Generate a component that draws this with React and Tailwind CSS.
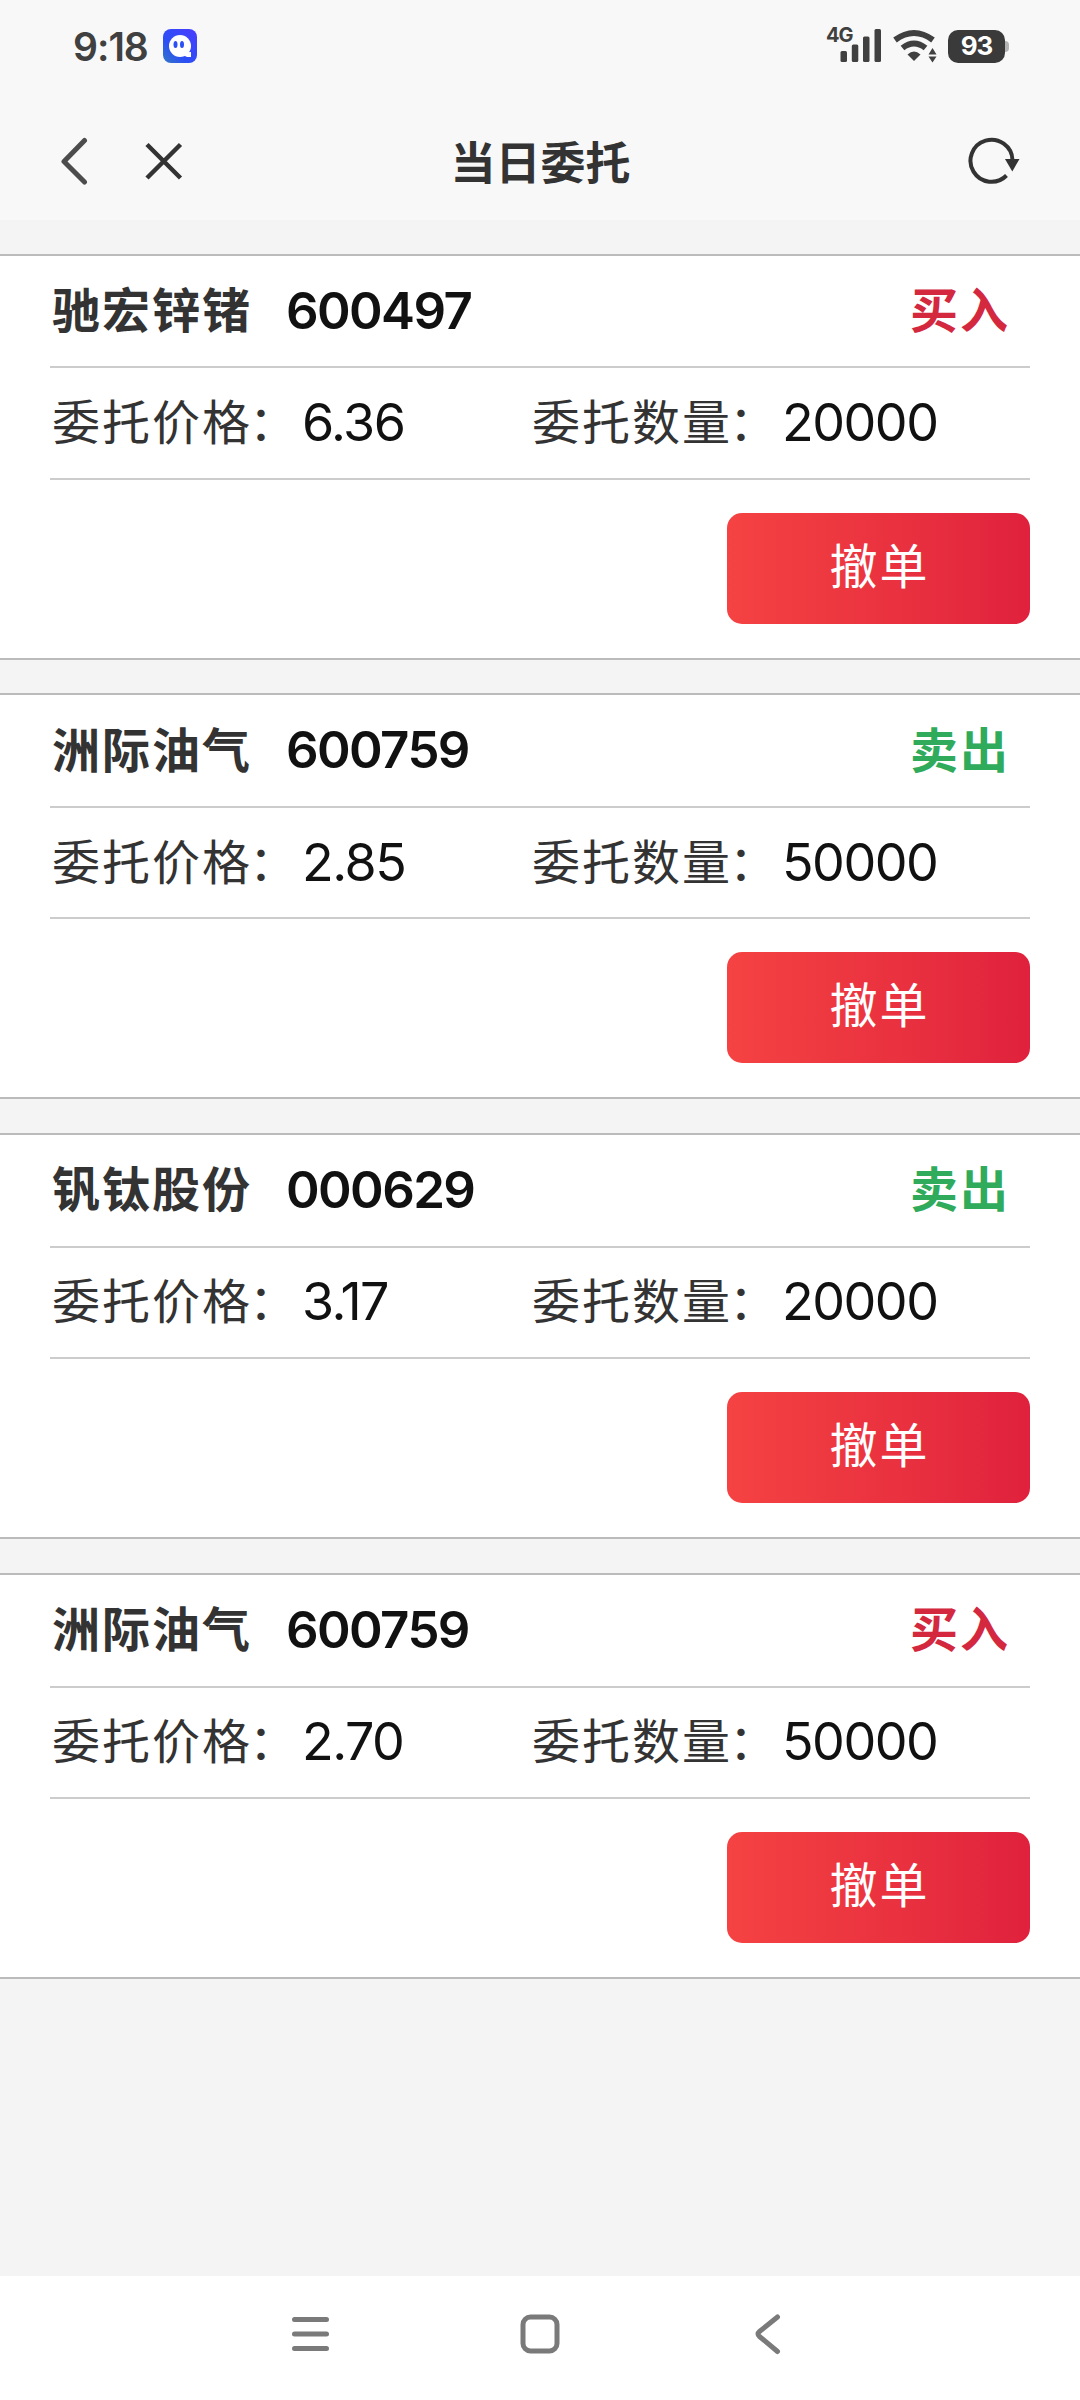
const orders = [
  { name: "驰宏锌锗", code: "600497", side: "buy", price: "6.36", amount: "20000" },
  { name: "洲际油气", code: "600759", side: "sell", price: "2.85", amount: "50000" },
  { name: "钒钛股份", code: "000629", side: "sell", price: "3.17", amount: "20000" },
  { name: "洲际油气", code: "600759", side: "buy", price: "2.70", amount: "50000" },
]

export default function App() {
  return (
    <div className="w-[1080px] h-[2400px] flex flex-col bg-[#f4f4f4] font-['Inter','Noto_Sans_CJK_SC',sans-serif] text-[#333333] overflow-hidden">
      <div className="h-[220px] shrink-0 bg-[#f8f8f8]">
        <StatusBar />
        <Header />
      </div>
      <div className="flex-1 pt-[33.6px] flex flex-col gap-[33.8px]">
        {orders.map((order, i) => (
          <OrderCard order={order} key={i} />
        ))}
      </div>
      <NavBar />
    </div>
  )
}

function StatusBar() {
  return (
    <div className="h-[92px] flex items-center justify-between pl-[73px] pr-[71px]">
      <div className="flex items-center">
        <span className="w-[90px] text-[39px] leading-none font-semibold tracking-[-1px] text-[#404040]">9:18</span>
        <svg width="34" height="34" viewBox="0 0 34 34">
          <defs>
            <linearGradient id="app" x1="0" y1="1" x2="1" y2="0">
              <stop offset="0" stopColor="#3478c4" />
              <stop offset="0.35" stopColor="#2b50f4" />
              <stop offset="1" stopColor="#4a3cff" />
            </linearGradient>
          </defs>
          <rect width="34" height="34" rx="8" fill="url(#app)" />
          <circle cx="17" cy="17" r="11" fill="#fff" />
          <path d="M20 23.500L28 23V28H24L20 26z" fill="#fff" />
          <ellipse cx="12.500" cy="15.500" rx="2" ry="3.500" fill="#2b50f4" />
          <ellipse cx="19" cy="15.500" rx="2" ry="3.500" fill="#2b50f4" />
        </svg>
      </div>
      <div className="flex items-center gap-[11px]">
        <div className="relative">
          <span className="absolute left-[1px] -top-[4px] text-[20px] leading-none font-bold tracking-[-1px] text-[#404040]">4G</span>
          <svg width="56" height="34" viewBox="0 0 56 34" fill="#404040">
            <rect x="15.500" y="22" width="6.500" height="11" rx="1.500" />
            <rect x="26.800" y="15.500" width="6.500" height="17.500" rx="1.500" />
            <rect x="38" y="7.500" width="6.500" height="25.500" rx="1.500" />
            <rect x="49.500" y="0" width="6.500" height="33" rx="1.500" />
          </svg>
        </div>
        <svg width="45" height="34" viewBox="0 0 45 34">
          <path d="M3 11Q22 -3 41 11" fill="none" stroke="#404040" strokeWidth="6" />
          <path d="M10.500 19Q22 10 33.500 19" fill="none" stroke="#404040" strokeWidth="6" />
          <path d="M15.500 25.500Q22 19.500 28.500 25.500L22 32z" fill="#404040" />
          <path d="M36.500 25.500L40.500 19L44.500 25.500zM36.500 27.500H44.500L40.500 33.500z" fill="#404040" />
        </svg>
        <div className="flex items-center">
          <div className="w-[57px] h-[33px] rounded-[10px] bg-[#3a3a3a] text-white text-[26px] leading-none font-bold tracking-[-1px] flex items-center justify-center">93</div>
          <div className="w-[4px] h-[11px] rounded-r-[4px] bg-[#b4b4b4]" />
        </div>
      </div>
    </div>
  )
}

function Header() {
  return (
    <div className="h-[128px] pt-[10px] pl-[61px] pr-[60px] grid grid-cols-[1fr_auto_1fr] items-center">
      <div className="flex items-center gap-[57px]">
        <svg width="27" height="48" viewBox="0 0 27 48" fill="none" stroke="#4c4c4c" strokeWidth="5" strokeLinecap="round" strokeLinejoin="round">
          <path d="M23.500 3.500L3 24.500L23.500 45" />
        </svg>
        <svg width="38" height="38" viewBox="0 0 38 38" fill="none" stroke="#333" strokeWidth="4.500">
          <path d="M2 2.500L35.500 36M35.500 2.500L2 36" />
        </svg>
      </div>
      <h1 className="pt-[4px] text-[45px] leading-none font-bold">当日委托</h1>
      <svg className="justify-self-end" width="52" height="48" viewBox="0 0 52 48">
        <path d="M38.500 38.500A21 21 0 1 1 44.500 23" fill="none" stroke="#333" strokeWidth="4" />
        <path d="M37 22H51.500L44.300 34.500z" fill="#333" />
      </svg>
    </div>
  )
}

function OrderCard({ order }) {
  return (
    <div className="h-[406px] shrink-0 bg-white border-y-2 border-[#bbbbbb] px-[50px]">
      <div className="h-[112.6px] flex items-center justify-between border-b-2 border-[#cccccc] pl-[2px] pr-[20px] text-[48px] font-bold">
        <div className="flex items-center">
          <span className="w-[234px] tracking-[2px]">{order.name}</span>
          <span className="text-[51px] font-semibold tracking-[-1.6px] text-[#111111]">{order.code}</span>
        </div>
        {order.side === "buy" ? (
          <span className="tracking-[2px] text-[#d4283f]">买入</span>
        ) : (
          <span className="tracking-[2px] text-[#2fab5b]">卖出</span>
        )}
      </div>
      <div className="h-[111.4px] flex items-center border-b-2 border-[#cccccc] pl-[2px]">
        <Field label="委托价格" value={order.price} />
        <Field label="委托数量" value={order.amount} />
      </div>
      <div className="pt-[33px] flex justify-end">
        <button className="w-[303px] h-[111px] rounded-[15px] bg-linear-to-r from-[#f54242] to-[#e0213d] text-white text-[48px] leading-none tracking-[2px] pl-[2px] pb-[3px]">
          撤单
        </button>
      </div>
    </div>
  )
}

function Field({ label, value }) {
  return (
    <div className="w-[480px] flex items-center">
      <span className="w-[250px] text-[48px] tracking-[2px]">
        {label}
        <span className="-ml-[3px]">：</span>
      </span>
      <span className="text-[52px] tracking-[-1.5px] text-[#111111]">{value}</span>
    </div>
  )
}

function NavBar() {
  return (
    <div className="h-[124px] shrink-0 bg-white flex items-center justify-center gap-[190px] pb-[9px]">
      <svg width="40" height="44" viewBox="0 0 40 44" stroke="#7a7a7a" strokeWidth="5" strokeLinecap="round">
        <path d="M4.500 7.500H36.500M4.500 22H36.500M4.500 36.500H36.500" />
      </svg>
      <svg width="40" height="44" viewBox="0 0 40 44" fill="none" stroke="#7a7a7a" strokeWidth="5">
        <rect x="3" y="5" width="34" height="34" rx="7.500" />
      </svg>
      <svg width="40" height="44" viewBox="0 0 40 44" fill="none" stroke="#7a7a7a" strokeWidth="5" strokeLinecap="round">
        <path d="M27.500 5L9.500 19.500Q6.500 22 9.500 24.500L27.500 39.500" />
      </svg>
    </div>
  )
}
